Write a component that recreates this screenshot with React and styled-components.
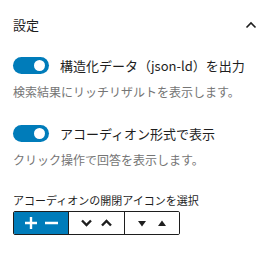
import React, { useState } from 'react';
import styled, { createGlobalStyle } from 'styled-components';

const GlobalStyle = createGlobalStyle`
  body {
    margin: 0;
    background: #fff;
    font-family: "Noto Sans CJK JP", "Noto Sans", sans-serif;
    color: #1e1e1e;
  }
`;

const Panel = styled.div`
  width: 270px;
  height: 262px;
  background: #fff;
`;

const PanelHeader = styled.div`
  height: 50px;
  display: flex;
  align-items: center;
  justify-content: space-between;
  padding: 0 13px;
`;

const PanelTitle = styled.span`
  font-size: 13px;
  line-height: 18px;
`;

const PanelBody = styled.div`
  padding: 0 13px;
  display: flex;
  flex-direction: column;
`;

const ToggleRow = styled.label`
  display: flex;
  align-items: center;
  gap: 11px;
  margin-top: ${props => props.offset}px;
  height: 17px;
`;

const Track = styled.span`
  position: relative;
  width: 36px;
  height: 17px;
  border-radius: 9px;
  background: ${props => (props.on ? '#007cba' : '#fff')};
  border: ${props => (props.on ? 'none' : '1px solid #1e1e1e')};
  flex-shrink: 0;
`;

const Knob = styled.span`
  position: absolute;
  top: 3px;
  left: ${props => (props.on ? '21px' : '3px')};
  width: 11px;
  height: 11px;
  border-radius: 50%;
  background: ${props => (props.on ? '#fff' : '#1e1e1e')};
`;

const ToggleLabel = styled.span`
  font-size: 13px;
  line-height: 18px;
  color: #1e1e1e;
  white-space: nowrap;
`;

const Help = styled.p`
  margin: 9px 0 0;
  font-size: 12px;
  line-height: 18px;
  color: #757575;
`;

const GroupLabel = styled.div`
  margin-top: 23px;
  font-size: 11px;
  line-height: 16px;
  color: #1e1e1e;
`;

const ButtonGroup = styled.div`
  display: flex;
  margin-top: 3px;
  width: 165px;
  border: 1px solid #1e1e1e;
  border-radius: 2px;
  overflow: hidden;
`;

const IconButton = styled.button`
  flex: 1;
  height: 22px;
  display: flex;
  align-items: center;
  justify-content: center;
  gap: ${props => props.gap}px;
  padding: 0;
  border: none;
  border-left: ${props => (props.first ? 'none' : '1px solid #1e1e1e')};
  background: ${props => (props.active ? '#007cba' : '#fff')};
  color: ${props => (props.active ? '#fff' : '#1e1e1e')};
  cursor: pointer;
`;

const Toggle = ({ on, onClick, children, offset }) => (
  <ToggleRow offset={offset} onClick={onClick}>
    <Track on={on}>
      <Knob on={on} />
    </Track>
    <ToggleLabel>{children}</ToggleLabel>
  </ToggleRow>
);

export default function App() {
  const [structured, setStructured] = useState(true);
  const [accordion, setAccordion] = useState(true);
  const [icon, setIcon] = useState(0);

  return (
    <Panel>
      <GlobalStyle />
      <PanelHeader>
        <PanelTitle>設定</PanelTitle>
        <svg width="12" height="8" viewBox="0 0 12 8">
          <path d="M1.5 6.5 L6 2 L10.5 6.5" fill="none" stroke="#1e1e1e" strokeWidth="1.6" />
        </svg>
      </PanelHeader>
      <PanelBody>
        <Toggle offset={7} on={structured} onClick={() => setStructured(v => !v)}>
          構造化データ（json-ld）を出力
        </Toggle>
        <Help>検索結果にリッチリザルトを表示します。</Help>
        <Toggle offset={24} on={accordion} onClick={() => setAccordion(v => !v)}>
          アコーディオン形式で表示
        </Toggle>
        <Help>クリック操作で回答を表示します。</Help>
        <GroupLabel>アコーディオンの開閉アイコンを選択</GroupLabel>
        <ButtonGroup>
          <IconButton first active={icon === 0} gap={8} onClick={() => setIcon(0)}>
            <svg width="12" height="12" viewBox="0 0 12 12">
              <path d="M6 0 V12 M0 6 H12" stroke="currentColor" strokeWidth="2.4" />
            </svg>
            <svg width="13" height="12" viewBox="0 0 13 12">
              <path d="M0 6 H13" stroke="currentColor" strokeWidth="2.4" />
            </svg>
          </IconButton>
          <IconButton active={icon === 1} gap={9} onClick={() => setIcon(1)}>
            <svg width="11" height="8" viewBox="0 0 11 8">
              <path d="M1 1.5 L5.5 6 L10 1.5" fill="none" stroke="currentColor" strokeWidth="2.4" />
            </svg>
            <svg width="11" height="8" viewBox="0 0 11 8">
              <path d="M1 6.5 L5.5 2 L10 6.5" fill="none" stroke="currentColor" strokeWidth="2.4" />
            </svg>
          </IconButton>
          <IconButton active={icon === 2} gap={12} onClick={() => setIcon(2)}>
            <svg width="8" height="7" viewBox="0 0 8 7">
              <path d="M0 1 H8 L4 6.5 Z" fill="currentColor" />
            </svg>
            <svg width="8" height="7" viewBox="0 0 8 7">
              <path d="M0 6 H8 L4 0.5 Z" fill="currentColor" />
            </svg>
          </IconButton>
        </ButtonGroup>
      </PanelBody>
    </Panel>
  );
}
